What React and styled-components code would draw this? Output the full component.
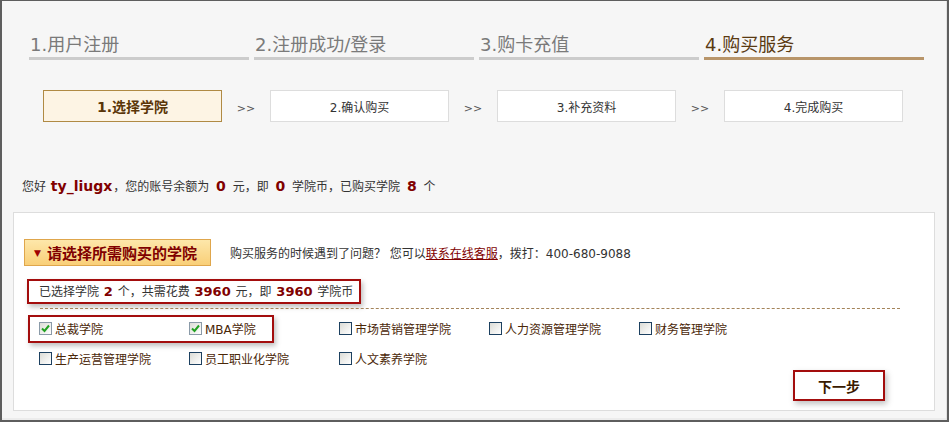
import React from 'react'
import styled, { createGlobalStyle } from 'styled-components'

const GlobalStyle = createGlobalStyle`
  html, body {
    margin: 0;
    padding: 0;
    background: #f6f6f6;
  }
  body {
    font-family: "DejaVu Sans", "Noto Sans CJK SC", sans-serif;
    font-size: 12px;
    color: #333;
  }
`

const tabs = ['1.用户注册', '2.注册成功/登录', '3.购卡充值', '4.购买服务']
const steps = ['1.选择学院', '2.确认购买', '3.补充资料', '4.完成购买']
const colleges = [
  { name: '总裁学院', checked: true },
  { name: 'MBA学院', checked: true },
  { name: '市场营销管理学院' },
  { name: '人力资源管理学院' },
  { name: '财务管理学院' },
  { name: '生产运营管理学院' },
  { name: '员工职业化学院' },
  { name: '人文素养学院' },
]

function Check({ checked }) {
  return (
    <Box $checked={checked}>
      {checked && (
        <svg width="9" height="9" viewBox="0 0 9 9">
          <path d="M1 4.5 L3.5 7 L8 1.5" fill="none" stroke="#21a121" strokeWidth="2" />
        </svg>
      )}
    </Box>
  )
}

function App() {
  return (
    <Frame>
      <GlobalStyle />
      <Tabs>
        {tabs.map((t, i) => (
          <Tab key={t} $active={i === 3}>{t}</Tab>
        ))}
      </Tabs>
      <Steps>
        {steps.map((s, i) => (
          <React.Fragment key={s}>
            {i > 0 && <Arrow>&gt;&gt;</Arrow>}
            <Step $active={i === 0}>{s}</Step>
          </React.Fragment>
        ))}
      </Steps>
      <Greeting>
        您好 <User>ty_liugx</User>，您的账号余额为 <Num>0</Num> 元，即 <Num>0</Num> 学院币，已购买学院 <Num>8</Num> 个
      </Greeting>
      <Panel>
        <Head>
          <Pick>
            <Tri>▼</Tri>请选择所需购买的学院
          </Pick>
          <Help>
            购买服务的时候遇到了问题？ 您可以<Link>联系在线客服</Link>，拨打：400-680-9088
          </Help>
        </Head>
        <Summary>
          已选择学院 <Num $small>2</Num> 个，共需花费 <Num $small>3960</Num> 元，即 <Num $small>3960</Num> 学院币
        </Summary>
        <Dashed />
        <Grid>
          <Mark />
          {colleges.map((c) => (
            <Item key={c.name}>
              <Check checked={c.checked} />
              {c.name}
            </Item>
          ))}
        </Grid>
        <Actions>
          <Next>下一步</Next>
        </Actions>
      </Panel>
    </Frame>
  )
}

const Frame = styled.div`
  width: 949px;
  height: 422px;
  box-sizing: border-box;
  border-style: solid;
  border-color: #5e5e5e;
  border-width: 1px 2px 2px 2px;
  box-shadow: inset -1px 0 #e2e2e2, inset 0 -2px #ececec;
  background: #f6f6f6;
  overflow: hidden;
`

const Tabs = styled.div`
  display: flex;
  gap: 5px;
  padding: 34px 0 0 27px;
`

const Tab = styled.div`
  width: 220px;
  height: 25px;
  box-sizing: border-box;
  line-height: 20px;
  font-size: 18px;
  padding-left: 1px;
  color: ${(p) => (p.$active ? '#5a3a12' : '#7a7a7a')};
  border-bottom: 3px solid ${(p) => (p.$active ? '#b8956a' : '#cccccc')};
`

const Steps = styled.div`
  display: flex;
  align-items: center;
  margin-top: 30px;
  padding-left: 41px;
`

const Step = styled.div`
  width: 179px;
  height: 32px;
  box-sizing: border-box;
  display: flex;
  align-items: center;
  justify-content: center;
  background: ${(p) => (p.$active ? '#fdf4e4' : '#ffffff')};
  border: 1px solid ${(p) => (p.$active ? '#b08a44' : '#dddddd')};
  color: ${(p) => (p.$active ? '#5a3508' : '#333')};
  font-size: ${(p) => (p.$active ? '14px' : '12px')};
  font-weight: ${(p) => (p.$active ? 'bold' : 'normal')};
`

const Arrow = styled.div`
  width: 48px;
  text-align: center;
  color: #555;
  font-size: 11px;
  padding-top: 4px;
`

const Greeting = styled.div`
  margin-top: 54px;
  padding-left: 20px;
  line-height: 20px;
  color: #333;
`

const User = styled.b`
  font-size: 14px;
  color: #800000;
  margin: 0 1px;
`

const Num = styled.b`
  font-size: ${(p) => (p.$small ? '13px' : '14px')};
  color: #800000;
  margin: 0 ${(p) => (p.$small ? '1px' : '3px')};
`

const Panel = styled.div`
  margin: 15px 0 0 11px;
  width: 922px;
  height: 199px;
  box-sizing: border-box;
  border: 1px solid #dddddd;
  background: #fff;
  padding: 26px 0 0 10px;
`

const Head = styled.div`
  display: flex;
  align-items: center;
  gap: 19px;
  height: 27px;
`

const Pick = styled.div`
  width: 187px;
  height: 27px;
  box-sizing: border-box;
  display: flex;
  align-items: center;
  padding-left: 9px;
  background: linear-gradient(#fde7aa, #f9cf78);
  border: 1px solid #dfa64c;
  color: #800000;
  font-weight: bold;
  font-size: 15px;
`

const Tri = styled.span`
  font-size: 9px;
  color: #a00000;
  margin-right: 6px;
`

const Help = styled.div`
  color: #333;
`

const Link = styled.a`
  color: #800000;
  text-decoration: underline;
`

const Summary = styled.div`
  margin: 13px 0 0 3px;
  width: 334px;
  height: 25px;
  box-sizing: border-box;
  line-height: 21px;
  padding-left: 10px;
  white-space: nowrap;
  border: 2px solid #a30d0d;
  box-shadow: 2px 3px 5px rgba(0, 0, 0, 0.25);
  color: #333;
`

const Dashed = styled.div`
  margin: 4px 0 0 16px;
  width: 860px;
  border-top: 1px dashed #a4845a;
`

const Grid = styled.div`
  position: relative;
  display: grid;
  grid-template-columns: repeat(5, 150px);
  row-gap: 10px;
  margin: 9px 0 0 15px;
`

const Mark = styled.div`
  position: absolute;
  left: -11px;
  top: -3px;
  width: 246px;
  height: 28px;
  box-sizing: border-box;
  border: 2px solid #a30d0d;
  box-shadow: 2px 3px 5px rgba(0, 0, 0, 0.25);
  pointer-events: none;
`

const Item = styled.label`
  display: flex;
  align-items: center;
  height: 20px;
  color: #4a2708;
`

const Box = styled.span`
  width: 13px;
  height: 13px;
  box-sizing: border-box;
  margin-right: 3px;
  display: flex;
  align-items: center;
  justify-content: center;
  border: 1px solid ${(p) => (p.$checked ? '#8a9aa8' : '#1c4060')};
  background: linear-gradient(135deg, #dcdcd6, #ffffff);
`

const Actions = styled.div`
  display: flex;
  justify-content: flex-end;
  padding-right: 49px;
  margin-top: 2px;
`

const Next = styled.button`
  width: 92px;
  height: 31px;
  border: 2px solid #a30d0d;
  background: #fff;
  box-shadow: 2px 3px 6px rgba(0, 0, 0, 0.25);
  font-family: "DejaVu Sans", "Noto Sans CJK SC", sans-serif;
  font-size: 14px;
  font-weight: bold;
  color: #3a1a00;
  cursor: pointer;
`

export default App
